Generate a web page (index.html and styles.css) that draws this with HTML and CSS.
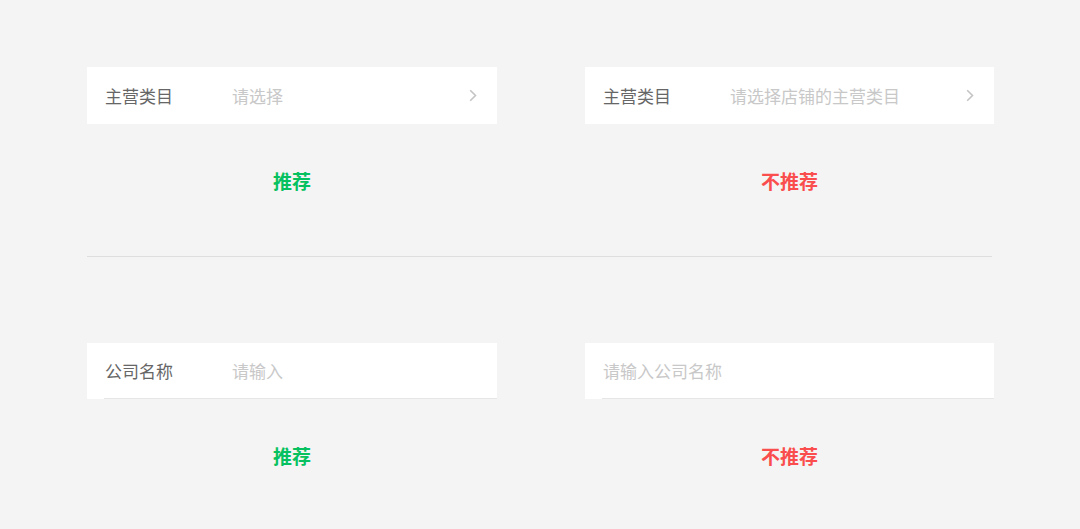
FILE: index.html
```html
<!DOCTYPE html>
<html lang="zh-CN">
<head>
<meta charset="utf-8">
<link rel="stylesheet" href="styles.css">
</head>
<body>
<div class="page">
  <div class="section">
    <div class="cell">
      <div class="card">
        <div class="row">
          <span class="label">主营类目</span>
          <span class="placeholder">请选择</span>
          <svg class="chevron" width="8" height="13" viewBox="0 0 8 13"><path d="M1.2 1.2 L6.5 6.5 L1.2 11.8" fill="none" stroke="#c4c4c4" stroke-width="1.6"/></svg>
        </div>
      </div>
      <div class="caption good">推荐</div>
    </div>
    <div class="cell">
      <div class="card">
        <div class="row">
          <span class="label">主营类目</span>
          <span class="placeholder">请选择店铺的主营类目</span>
          <svg class="chevron" width="8" height="13" viewBox="0 0 8 13"><path d="M1.2 1.2 L6.5 6.5 L1.2 11.8" fill="none" stroke="#c4c4c4" stroke-width="1.6"/></svg>
        </div>
      </div>
      <div class="caption bad">不推荐</div>
    </div>
  </div>
  <div class="divider"></div>
  <div class="section second">
    <div class="cell">
      <div class="card input-card">
        <div class="row lined">
          <span class="label">公司名称</span>
          <span class="placeholder">请输入</span>
        </div>
      </div>
      <div class="caption good">推荐</div>
    </div>
    <div class="cell">
      <div class="card input-card">
        <div class="row lined">
          <span class="placeholder">请输入公司名称</span>
        </div>
      </div>
      <div class="caption bad">不推荐</div>
    </div>
  </div>
</div>
</body>
</html>
```

FILE: styles.css
```css
* { box-sizing: border-box; }
html, body { margin: 0; padding: 0; }
body {
  background: #f4f4f4;
  font-family: "Noto Sans CJK SC", "Noto Sans", sans-serif;
  width: 1080px;
  height: 529px;
  overflow: hidden;
}
.page {
  padding: 67px 0 0 87px;
}
.section {
  display: grid;
  grid-template-columns: 410px 409px;
  column-gap: 88px;
}
.section.second {
  margin-top: 86px;
}
.card {
  background: #fff;
  height: 57px;
  padding-left: 17px;
}
.input-card {
  height: 56px;
}
.row {
  height: 100%;
  display: flex;
  align-items: center;
  padding-left: 1px;
  padding-right: 20px;
}
.row.lined {
  border-bottom: 1px solid #e6e6e6;
}
.label {
  width: 127px;
  flex: none;
  font-size: 17px;
  color: #666;
  line-height: 24px;
}
.placeholder {
  flex: 1;
  font-size: 17px;
  color: #c8c8c8;
  line-height: 24px;
}
.chevron {
  flex: none;
  display: block;
}
.caption {
  margin-top: 45px;
  text-align: center;
  font-size: 19px;
  font-weight: 700;
  line-height: 24px;
}
.good { color: #07c160; }
.bad { color: #fa4d4d; }
.divider {
  margin-top: 63px;
  width: 905px;
  height: 1px;
  background: #dedede;
}
```
